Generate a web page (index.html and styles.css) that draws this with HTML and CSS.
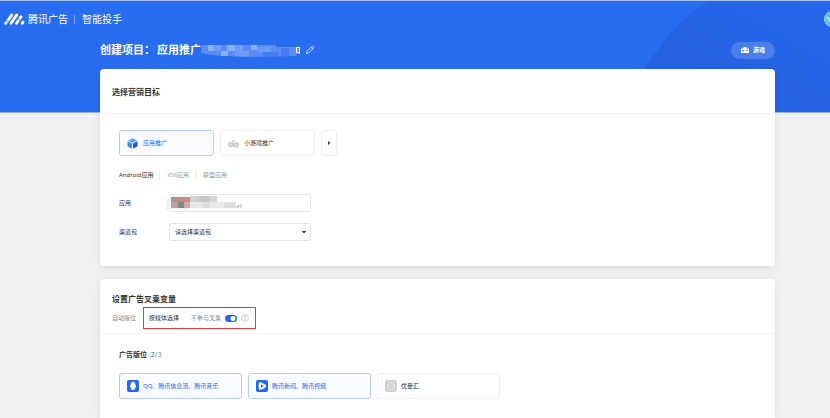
FILE: index.html
```html
<!DOCTYPE html>
<html lang="zh-CN">
<head>
    <meta charset="UTF-8">
    <meta name="viewport" content="width=device-width, initial-scale=1.0">
    <title>腾讯广告 智能投手</title>
    <link rel="stylesheet" href="styles.css">
</head>
<body>
    <div class="hero">
        <svg class="hero-shape" viewBox="0 0 190 112" preserveAspectRatio="none" aria-hidden="true">
            <defs>
                <linearGradient id="shade" x1="0" y1="1" x2="1" y2="0">
                    <stop offset="0" stop-color="#235fdc"/>
                    <stop offset="1" stop-color="#2768ec"/>
                </linearGradient>
            </defs>
            <path d="M0 74C18 52 32 20 70 0H190V112H0Z" fill="url(#shade)"/>
        </svg>
    </div>

    <header class="topbar">
        <a href="#" class="brand">
            <svg class="brand-logo" viewBox="0 0 21 12" aria-hidden="true">
                <g stroke="#fff" stroke-width="2.8" stroke-linecap="round">
                    <path d="M1.700 10.300L2.200 9.600M4.200 7L7.800 1.900M7 10.300L12.800 1.900M12.500 10.300L14.300 7.700M16 5.200L17 3.800M18.200 10.300L19 9.100"/>
                </g>
            </svg>
            腾讯广告
        </a>
        <span class="topbar-line"></span>
        <a href="#" class="product">智能投手</a>
        <a href="#" class="avatar" aria-label="账号">
            <svg viewBox="0 0 16 16" aria-hidden="true">
                <circle cx="8" cy="8" r="7.5" fill="#62bbe2" stroke="#9fd8ef"/>
                <path d="M3 6L6 10L9 8" fill="none" stroke="#e8f8ff" stroke-width="1.2"/>
            </svg>
        </a>
    </header>

    <main class="page">
        <div class="project">
            <h1>创建项目：<span class="project-name">应用推广</span></h1>
            <svg class="name-mask" viewBox="0 0 100 14" aria-hidden="true">
                <path d="M1 2H74L76 4H98V10L94 13L42 14L10 12L0 10Z" fill="#5b8cf3"/>
                <path d="M7 2h6v6H7zM26 2h8v6h-8zM20 8h7v5h-7zM50 2h6v5h-6z" fill="#8aaff8"/>
                <path d="M13 2h7v6h-7zM34 2h8v6h-8zM56 4h14v5H56zM34 8h14v5H34z" fill="#6f9bf6"/>
                <path d="M62 9h16v4H62zM80 5h8v8h-8z" fill="#457df1"/>
                <path d="M95.500 4.500h3v5h-3zM98.500 4v7" fill="none" stroke="#fff"/>
            </svg>
            <button type="button" class="edit" aria-label="编辑名称">
                <svg viewBox="0 0 10 10" aria-hidden="true">
                    <path d="M1.500 8.500L2 6.200L6.700 1.500Q7.500 1 8.300 1.700Q9 2.500 8.400 3.300L3.800 8ZM6 2.300L7.700 4" fill="none" stroke="#dbe6ff" stroke-width=".9"/>
                </svg>
            </button>
            <button type="button" class="game">
                <svg viewBox="0 0 8 6" aria-hidden="true">
                    <path d="M0 1.500H2.500V0H5.500V1.500H8V6H0Z" fill="#fff"/>
                    <path d="M1.200 3.700h2M2.200 2.700v2M5 3.700h2" stroke="#3e77ea" stroke-width=".8"/>
                </svg>
                游戏
            </button>
        </div>

        <section class="card">
            <div class="card-head">
                <h2>选择营销目标</h2>
            </div>
            <div class="card-body goal-body">
                <div class="goals">
                    <button type="button" class="option goal active">
                        <svg class="goal-icon" viewBox="0 0 11 11" aria-hidden="true">
                            <path d="M5.500 .3L10.300 2.500L5.500 4.900L.7 2.500Z" fill="#5fa5ff"/>
                            <path d="M.5 3.200L5 5.500V10.700L.5 8.300Z" fill="#3b8bff"/>
                            <path d="M10.500 3.200L6 5.500V10.700L10.500 8.300Z" fill="#1c5cea"/>
                        </svg>
                        应用推广
                    </button>
                    <button type="button" class="option goal">
                        <svg class="goal-icon" viewBox="0 0 11 11" aria-hidden="true">
                            <g fill="#e3e4e6" stroke="#c3c5c9" stroke-width="1.200">
                                <circle cx="2.600" cy="6.600" r="2"/>
                                <circle cx="8.400" cy="6.600" r="2"/>
                                <path d="M4.700 9V4.200Q4.700 2.300 7 2.600M6.300 9V5" fill="none"/>
                            </g>
                        </svg>
                        小游戏推广
                    </button>
                    <button type="button" class="option more" aria-label="更多">
                        <svg viewBox="0 0 4 4" aria-hidden="true"><path d="M1 0L3.500 2L1 4Z" fill="#444"/></svg>
                    </button>
                </div>

                <nav class="platforms">
                    <a href="#" class="current">Android应用</a>
                    <a href="#">iOS应用</a>
                    <a href="#">联盟应用</a>
                </nav>

                <div class="field">
                    <label for="app">应用</label>
                    <div class="app-box">
                        <input type="text" id="app">
                        <svg class="app-mask" viewBox="0 0 76 18" aria-hidden="true">
                            <path d="M0 5L8 2H22V16H0Z" fill="#f3f3f3"/>
                            <path d="M5 3h15v5H5z" fill="#b58f8d"/>
                            <path d="M14 3h10v5H14z" fill="#c18c87"/>
                            <path d="M5 8h7v6H5z" fill="#b0a5a4"/>
                            <path d="M12 8h6v6h-6z" fill="#8d8583"/>
                            <path d="M18 8h6v6h-6z" fill="#d2aaa6"/>
                            <path d="M24 2h8v6h-8z" fill="#cfcfd1"/>
                            <path d="M32 2h12v6H32z" fill="#c6c7ca"/>
                            <path d="M44 2h7v6h-7z" fill="#d6d6d8"/>
                            <path d="M24 8h34v6H24z" fill="#e8e8e8"/>
                            <path d="M36 8h8v6h-8z" fill="#dededf"/>
                            <path d="M58 8h11l2 6H58z" fill="#dddddf"/>
                            <path d="M71 13l2-2v2zM75 10v4" fill="none" stroke="#999" stroke-width=".7"/>
                        </svg>
                    </div>
                </div>

                <div class="field">
                    <label for="channel">渠道包</label>
                    <select id="channel">
                        <option>请选择渠道包</option>
                    </select>
                </div>
            </div>
        </section>

        <section class="card variables">
            <div class="card-head variable-head">
                <h2>设置广告叉乘变量</h2>
                <div class="modes">
                    <a href="#">自动版位</a>
                    <div class="highlight">
                        <a href="#" class="current">按媒体选择</a>
                        <label for="cross">不参与叉乘</label>
                        <input type="checkbox" id="cross" class="switch" checked>
                        <svg class="help" viewBox="0 0 8 8" aria-hidden="true">
                            <circle cx="4" cy="4" r="3.400" fill="none" stroke="#b8b8b8" stroke-width=".7"/>
                            <path d="M2.900 3.300Q3 2.200 4 2.200Q5.100 2.300 5 3.200Q4.900 3.800 4 4.200V4.800M4 5.400V6" fill="none" stroke="#b8b8b8" stroke-width=".7"/>
                        </svg>
                    </div>
                </div>
            </div>
            <div class="card-body">
                <h3>广告版位 <span class="count"><b>2</b>/3</span></h3>
                <div class="media">
                    <button type="button" class="option medium active">
                        <svg class="medium-icon" viewBox="0 0 12 12" aria-hidden="true">
                            <rect width="12" height="12" rx="2" fill="#2468f2"/>
                            <path d="M6 1.800C4.200 1.800 3.600 3.200 3.600 4.600C3.100 5.800 2.700 6.800 3 7.800L3.700 7.200C3.800 8 4 8.400 4.400 8.800L3.900 9.800H8.100L7.600 8.800C8 8.400 8.200 8 8.300 7.200L9 7.800C9.300 6.800 8.900 5.800 8.400 4.600C8.400 3.200 7.800 1.800 6 1.800Z" fill="#fff"/>
                        </svg>
                        QQ、腾讯信息流、腾讯音乐
                    </button>
                    <button type="button" class="option medium active">
                        <svg class="medium-icon" viewBox="0 0 12 12" aria-hidden="true">
                            <rect width="12" height="12" rx="2" fill="#2468f2"/>
                            <path d="M3 2.500Q5 1.500 9.500 4.800Q11 6 9.500 7.200Q5 10.500 3 9.500Q2 6 3 2.500Z" fill="#fff"/>
                            <path d="M5 4.300L7.700 6L5 7.700Z" fill="#2468f2"/>
                        </svg>
                        腾讯新闻、腾讯视频
                    </button>
                    <button type="button" class="option medium">
                        <svg class="medium-icon" viewBox="0 0 12 12" aria-hidden="true">
                            <rect width="12" height="12" rx="2" fill="#d0d1d3"/>
                            <circle cx="6" cy="6" r="3.600" fill="none" stroke="#ececed" stroke-width=".8"/>
                            <path d="M3.500 6L5 7L6.500 5.500L8.500 5" fill="none" stroke="#ececed" stroke-width=".8"/>
                        </svg>
                        优量汇
                    </button>
                </div>
            </div>
        </section>
    </main>
</body>
</html>
```
FILE: styles.css
```css
* {
    box-sizing: border-box;
}

body {
    display: flex;
    flex-direction: column;
    min-height: 100vh;
    margin: 0;
    background-color: #f0f0f0;
    font-family: "Noto Sans", "Noto Sans CJK SC", sans-serif;
    font-size: 6px;
    line-height: 10px;
    color: #333;
}

h1,
h2,
h3 {
    margin: 0;
    font-weight: bold;
}

a {
    color: inherit;
    text-decoration: none;
}

button,
input,
select {
    margin: 0;
    font: inherit;
    color: inherit;
}

button {
    padding: 0;
    border: none;
    background: none;
    cursor: pointer;
}

svg {
    display: block;
    flex: none;
}

/* blue backdrop behind the top of the page */
.hero {
    position: absolute;
    top: 0;
    left: 0;
    right: 0;
    z-index: -1;
    height: 113px;
    background-color: #286cf0;
    border-top: 1px solid #a5bfe8;
    border-bottom: 1px solid #94b5f5;
}

.hero-shape {
    width: 190px;
    height: 100%;
    margin-left: auto;
}

.topbar {
    display: flex;
    align-items: center;
    height: 38px;
    padding-left: 4px;
    overflow: hidden;
    color: #fff;
    font-size: 10px;
}

.brand {
    display: flex;
    align-items: center;
    gap: 3px;
}

.brand-logo {
    width: 21px;
    height: 12px;
}

.topbar-line {
    width: 1px;
    height: 9px;
    margin: 0 7px 0 6px;
    background-color: #7ba4f6;
}

.avatar {
    margin-left: auto;
    margin-right: -10px;
}

.avatar svg {
    width: 16px;
    height: 16px;
}

.page {
    display: flex;
    flex: 1;
    flex-direction: column;
    padding: 0 55px 0 100px;
}

.project {
    display: flex;
    align-items: center;
    height: 24px;
    margin-bottom: 7px;
    color: #fff;
}

.project h1 {
    font-size: 11px;
    line-height: 16px;
}

.project-name {
    margin-left: 2px;
}

.name-mask {
    width: 100px;
    height: 14px;
}

.edit {
    margin-left: 4px;
}

.edit svg {
    width: 10px;
    height: 10px;
}

.game {
    display: flex;
    align-items: center;
    justify-content: center;
    gap: 4px;
    width: 44px;
    height: 17px;
    margin-left: auto;
    border-radius: 9px;
    background-color: #4a7fea;
    font-weight: bold;
}

.game svg {
    width: 8px;
    height: 6px;
}

.card {
    margin-bottom: 13px;
    border-radius: 4px;
    background-color: #fff;
    box-shadow: 0 2px 8px rgba(0, 0, 0, 0.08);
}

.card-head {
    padding: 17px 12px 15px;
    border-bottom: 1px solid #f3f3f3;
}

.card-head h2 {
    font-size: 8px;
    line-height: 12px;
}

.card-body {
    padding: 16px 19px;
}

.goal-body {
    padding-bottom: 14px;
}

.goals {
    display: flex;
    gap: 6px;
}

.option {
    display: flex;
    align-items: center;
    height: 26px;
    border: 1px solid #efefef;
    border-radius: 3px;
    background-color: #fff;
}

.option.active {
    border-color: #b5cdfb;
    background-color: #f9fbff;
    color: #2468f2;
}

.goal {
    gap: 5px;
    width: 95px;
    padding-left: 7px;
}

.goal-icon {
    width: 11px;
    height: 11px;
}

.more {
    justify-content: center;
    width: 16px;
}

.more svg {
    width: 4px;
    height: 4px;
}

.platforms {
    display: flex;
    margin: 14px 0;
    color: #999;
}

.platforms a + a {
    margin-left: 6px;
    padding-left: 7px;
    border-left: 1px solid #ececec;
}

.platforms .current,
.modes .current {
    color: #333;
}

.field {
    display: flex;
    align-items: center;
    margin-bottom: 11px;
}

.field > label {
    width: 50px;
}

.app-box {
    position: relative;
}

.field input,
.field select {
    display: block;
    width: 142px;
    height: 18px;
    padding: 0 5px;
    border: 1px solid #e6e6e6;
    border-radius: 2px;
    background-color: #fff;
}

.field select {
    appearance: none;
    background-image: linear-gradient(to bottom left, #444 50%, transparent 50%), linear-gradient(to bottom right, #444 50%, transparent 50%);
    background-position: right 6px center, right 4px center;
    background-size: 2px 3px;
    background-repeat: no-repeat;
}

/* blurred-out app name */
.app-mask {
    position: absolute;
    top: 0;
    left: -3px;
    width: 76px;
    height: 18px;
}

.variables {
    flex: 1;
    margin-bottom: 0;
    border-radius: 4px 4px 0 0;
}

.variable-head {
    padding: 14px 12px 4px;
}

.modes {
    display: flex;
    align-items: center;
    gap: 7px;
    margin-top: 2px;
    color: #888;
}

.highlight {
    display: flex;
    align-items: center;
    height: 22px;
    padding: 0 6px 0 5px;
    border: 1px solid #e5383f;
}

.highlight label {
    margin: 0 4px 0 12px;
}

.switch {
    appearance: none;
    width: 12px;
    height: 7px;
    border-radius: 4px;
    background: radial-gradient(circle at 8px 50%, #fff 2px, transparent 3px) #2468f2;
}

.help {
    width: 8px;
    height: 8px;
    margin-left: 4px;
}

h3 {
    font-size: 7px;
}

.count {
    margin-left: 2px;
    font-weight: normal;
    color: #888;
}

.count b {
    font-weight: normal;
    color: #2468f2;
}

.media {
    display: flex;
    gap: 6px;
    margin-top: 13px;
}

.medium {
    gap: 4px;
    width: 123px;
    padding-left: 7px;
}

.medium-icon {
    width: 12px;
    height: 12px;
}
```
